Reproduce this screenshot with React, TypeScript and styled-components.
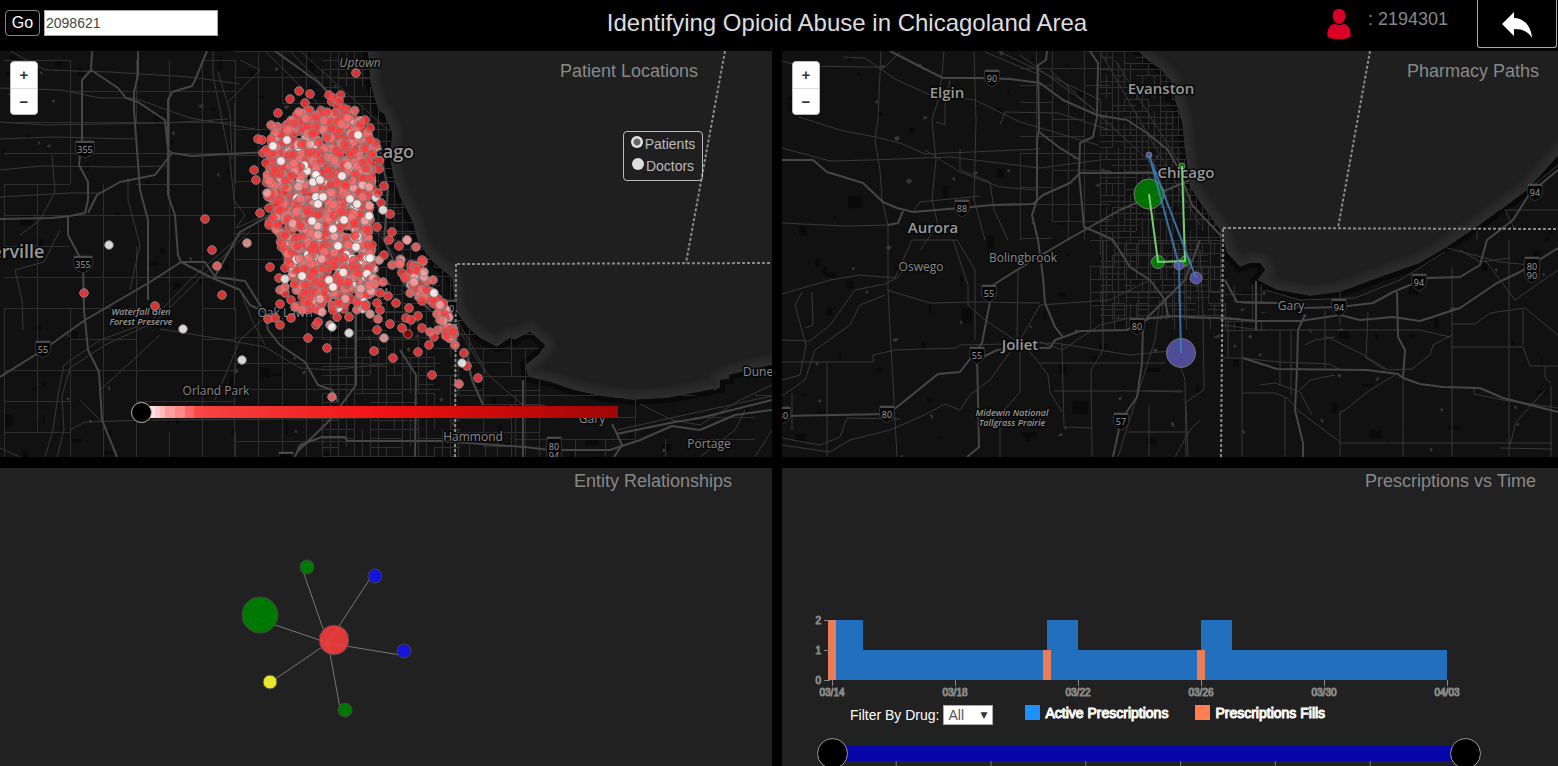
import React from 'react';
import styled, { createGlobalStyle } from 'styled-components';

const GlobalStyle = createGlobalStyle`
  * { box-sizing: border-box; }
  body {
    margin: 0;
    background: #000;
    font-family: "Liberation Sans", Arial, sans-serif;
  }
`;

/* ---------- page frame ---------- */

const Page = styled.div`
  display: flex;
  flex-direction: column;
  height: 100vh;
  overflow: hidden;
`;

const Header = styled.header`
  display: flex;
  align-items: flex-start;
  height: 51px;
  flex: none;
`;

const SearchForm = styled.form`
  display: flex;
  gap: 4px;
  padding: 10px 0 0 5px;
`;

const GoButton = styled.button`
  width: 35px;
  height: 26px;
  padding: 0;
  border: 1px solid #888;
  border-radius: 4px;
  background: #000;
  color: #fff;
  font: 16px "Liberation Sans", Arial, sans-serif;
`;

const PatientInput = styled.input`
  width: 174px;
  height: 26px;
  padding: 0 1px;
  border: 1px solid #aaa;
  background: #fff;
  color: #444;
  font: 14px "Liberation Sans", Arial, sans-serif;
`;

const PageTitle = styled.h1`
  flex: 1;
  margin: 0;
  padding: 8px 0 0 150px;
  text-align: center;
  white-space: nowrap;
  color: #ddd;
  font-size: 24px;
  font-weight: 400;
  line-height: 30px;
`;

const CurrentPatient = styled.div`
  display: flex;
  gap: 16px;
  padding: 8px 29px 0 0;
  color: #888;
  font-size: 18px;
  line-height: 22px;
`;

const BackButton = styled.button`
  display: flex;
  align-items: center;
  justify-content: center;
  width: 80px;
  height: 48px;
  margin-right: 1px;
  padding: 3px 0 0;
  border: 1px solid #aaa;
  border-top: 0;
  border-radius: 0 0 3px 3px;
  background: #000;
`;

const Dashboard = styled.main`
  flex: 1;
  min-height: 0;
  display: grid;
  grid-template-columns: minmax(0, 193fr) minmax(0, 194fr);
  grid-template-rows: minmax(0, 203fr) minmax(0, 149fr);
  gap: 11px 10px;
`;

const Panel = styled.section`
  position: relative;
  display: flex;
  flex-direction: column;
  overflow: hidden;
  background: #212121;
`;

const PanelTitle = styled.h2<{ $inset: number; $overlay?: boolean }>`
  margin: 0;
  padding-right: ${(p) => p.$inset}px;
  text-align: right;
  color: #888;
  font-size: 18px;
  font-weight: 400;
  line-height: 26px;
  ${(p) => p.$overlay && 'position: absolute; top: 7px; right: 0;'}
`;

const Canvas = styled.svg`
  display: block;
  width: 100%;
  flex: 1;
  min-height: 0;
`;

/* ---------- map controls ---------- */

const ZoomBox = styled.div`
  position: absolute;
  top: 10px;
  left: 10px;
  display: flex;
  flex-direction: column;
  width: 28px;
  height: 54px;
  border: 1px solid #bbb;
  border-radius: 4px;
  overflow: hidden;
  background: #fff;
`;

const ZoomButton = styled.button`
  flex: 1;
  padding: 0;
  border: 0;
  background: #fff;
  color: #333;
  font: bold 15px "Liberation Sans", Arial, sans-serif;
  &:first-child { border-bottom: 1px solid #ddd; }
`;

const LayerChoice = styled.fieldset`
  position: absolute;
  top: 80px;
  right: 69px;
  display: flex;
  flex-direction: column;
  align-items: center;
  width: 80px;
  height: 50px;
  margin: 0;
  padding: 1px 0 0;
  border: 1px solid #bbb;
  border-radius: 4px;
`;

const LayerLabel = styled.label`
  display: flex;
  align-items: center;
  gap: 2px;
  color: #bbb;
  font-size: 14px;
  line-height: 22px;
`;

const Radio = styled.input`
  appearance: none;
  width: 12px;
  height: 12px;
  margin: 0 0 4px;
  border-radius: 50%;
  background: #ddd;
  &:checked {
    background: radial-gradient(circle, #666 0 3px, #e4e4e4 4px);
  }
`;

const RangeSlider = styled.input`
  appearance: none;
  position: absolute;
  left: 17%;
  top: 350px;
  width: 63%;
  height: 21px;
  margin: 0;
  background: transparent;
  &::-webkit-slider-runnable-track {
    height: 12px;
    background: linear-gradient(
      90deg,
      transparent 2%, #ffe0e0 2% 5%, #fcc 5% 6%, #fbb 6% 7%, #f99f9f 7% 9%,
      #f88 9% 11%, #f66 11% 13%, #f94a4a 13%, #f44141 16%, #f21414 50%, #d20a0a 72%, #9c0707
    );
  }
  &::-webkit-slider-thumb {
    appearance: none;
    width: 21px;
    height: 21px;
    margin-top: -4px;
    border: 1px solid #bbb;
    border-radius: 50%;
    background: #000;
  }
`;

/* ---------- prescriptions panel ---------- */

const Chart = styled.svg`
  display: block;
  flex: none;
  width: 100%;
  margin-top: 118px;
`;

const AxisText = styled.g`
  fill: #888;
  stroke: #888;
  stroke-width: 1px;
  font: 10px "Liberation Sans", Arial, sans-serif;
`;

const FilterRow = styled.div`
  display: flex;
  align-items: flex-start;
  flex: none;
  height: 38px;
  padding: 5px 0 0 68px;
  white-space: nowrap;
`;

const FilterLabel = styled.label`
  display: flex;
  align-items: center;
  gap: 4px;
  margin-right: 32px;
  color: #fff;
  font-size: 14px;
  line-height: 20px;
`;

const SelectWrap = styled.span`
  position: relative;
  &::after {
    content: "▼";
    position: absolute;
    top: 0;
    right: 6px;
    color: #333;
    font-family: "DejaVu Sans", sans-serif;
    font-size: 9px;
    pointer-events: none;
  }
`;

const DrugSelect = styled.select`
  appearance: none;
  display: block;
  width: 50px;
  height: 20px;
  padding: 0 4px;
  border: 1px solid #aaa;
  border-radius: 0;
  background: #fff;
  color: #555;
  font: 14px "Liberation Sans", Arial, sans-serif;
`;

const LegendItem = styled.span<{ $color: string }>`
  display: flex;
  gap: 5px;
  margin-right: 27px;
  color: #fff;
  font-size: 14px;
  line-height: 16px;
  -webkit-text-stroke: 1px #fff;
  &::before {
    content: "";
    width: 15px;
    height: 15px;
    background: ${(p) => p.$color};
  }
`;

const TimeRange = styled.div`
  position: relative;
  flex: none;
  height: 31px;
  margin: 0 77px 0 35px;
  padding: 8px 16px 0;
`;

const TimeTrack = styled.div`
  height: 15px;
  background: #0505a8;
`;

const TimeTicks = styled.svg`
  display: block;
  width: 100%;
  height: 8px;
`;

const TimeHandle = styled.input`
  appearance: none;
  position: absolute;
  inset: 0;
  width: 100%;
  height: 31px;
  margin: 0;
  background: transparent;
  pointer-events: none;
  &::-webkit-slider-thumb {
    appearance: none;
    width: 31px;
    height: 31px;
    border: 1px solid #999;
    border-radius: 50%;
    background: #000;
    pointer-events: auto;
  }
`;

/* ---------- map drawing ---------- */

const MapText = styled.text<{ $size: number; $strong?: boolean; $italic?: boolean }>`
  fill: ${(p) => (p.$strong ? '#999' : '#888')};
  stroke: #080808;
  stroke-width: 3px;
  stroke-linejoin: round;
  paint-order: stroke;
  text-anchor: middle;
  font-family: "Open Sans", "Noto Sans", sans-serif;
  font-size: ${(p) => p.$size}px;
  font-weight: ${(p) => (p.$strong ? 600 : 400)};
  font-style: ${(p) => (p.$italic ? 'italic' : 'normal')};
`;

const ShieldText = styled(MapText)`
  fill: #a0a0a0;
  stroke: none;
`;

const Streets = styled.g`
  fill: none;
  stroke: #2e2e2e;
  stroke-width: 1px;
`;

const Roads = styled.g`
  fill: none;
  stroke: #393939;
  stroke-width: 1px;
  stroke-linejoin: round;
`;

const Highways = styled.g`
  fill: none;
  stroke: #464646;
  stroke-width: 2px;
  stroke-linejoin: round;
`;

const Borders = styled.g`
  fill: none;
  stroke: #8a8a8a;
  stroke-width: 2px;
  stroke-dasharray: 3 2;
`;

const Dots = styled.g`
  stroke: #8c7f7f;
  stroke-width: 1px;
  fill-opacity: 0.84;
`;

type Pt = [number, number];
type Label = [string, number, number, number, boolean?, boolean?];

function seeded(seed: number) {
  let s = seed;
  return () => {
    s = (s * 16807) % 2147483647;
    return s / 2147483647;
  };
}

function Shield({ x, y, lines }: { x: number; y: number; lines: string[] }) {
  const wide = lines[0].length > 2;
  const w = wide ? 10 : 8;
  const h = lines.length > 1 ? 17 : 10;
  const top = lines.length > 1 ? y - 10 : y - 8;
  return (
    <g>
      <path
        d={`M${x - w + 1} ${top}H${x + w - 1}Q${x + w} ${y - 2} ${x + w - 1} ${y + h - 7}Q${x + w - 3} ${y + h - 3} ${x} ${y + h - 1}Q${x - w + 3} ${y + h - 3} ${x - w + 1} ${y + h - 7}Q${x - w} ${y - 2} ${x - w + 1} ${top}Z`}
        fill="#050505"
        stroke="#333"
      />
      <path d={`M${x - w + 1} ${top + 1}H${x + w - 1}`} stroke="#4a4a4a" strokeWidth="2" />
      {lines.map((t, i) => (
        <ShieldText key={t} $size={9} x={x} y={y + (lines.length > 1 ? 3 + i * 9 : 4)}>{t}</ShieldText>
      ))}
    </g>
  );
}

interface BaseMapProps {
  id: string;
  box: [number, number, number, number];
  land: string;
  coast: string;
  streets: string;
  roads: string[];
  highways: string[];
  borders: string;
  labels: Label[];
  shields: [number, number, ...string[]][];
  children?: React.ReactNode;
}

function BaseMap(p: BaseMapProps) {
  const [bx, by, bw, bh] = p.box;
  const rnd = seeded(bw * 7);
  const blobs = Array.from({ length: 190 }, () => ({
    x: bx + rnd() * bw,
    y: by + rnd() * bh,
    w: 2 + rnd() * rnd() * 16,
    h: 2 + rnd() * rnd() * 14,
    water: rnd() > 0.7,
  }));
  return (
    <Canvas viewBox={p.box.join(' ')} preserveAspectRatio="xMidYMid slice">
      <defs>
        <clipPath id={p.id}><path d={p.land} /></clipPath>
      </defs>
      <rect x={bx} y={by} width={bw} height={bh} fill="#1f1f1f" />
      <g fill="none" stroke="#555" strokeLinejoin="round">
        {[24, 20, 16, 12, 8, 5].map((w) => (
          <path key={w} d={p.coast} strokeWidth={w} strokeOpacity="0.055" />
        ))}
      </g>
      <path d={p.land} fill="#111" />
      <g clipPath={`url(#${p.id})`}>
        <path d={p.coast} fill="none" stroke="#090909" strokeWidth="10" />
        {blobs.map((b, i) =>
          b.water ? (
            <path
              key={i}
              d={`M${b.x} ${b.y}l${b.w / 3} -2l2 ${b.h / 4}l-${b.w / 4} 3z`}
              fill="#363636"
            />
          ) : (
            <rect key={i} x={b.x} y={b.y} width={b.w} height={b.h} fill="#0a0a0a" />
          ),
        )}
        <Streets><path d={p.streets} /></Streets>
        <Roads>{p.roads.map((d) => <path key={d} d={d} />)}</Roads>
        <Highways>{p.highways.map((d) => <path key={d} d={d} />)}</Highways>
      </g>
      <Borders><path d={p.borders} /></Borders>
      {p.shields.map(([x, y, ...lines]) => <Shield key={`${x}-${y}`} x={x} y={y} lines={lines} />)}
      {p.labels.map(([t, x, y, size, strong, italic]) => (
        <MapText key={t} x={x} y={y} $size={size} $strong={strong} $italic={italic}>{t}</MapText>
      ))}
      {p.children}
    </Canvas>
  );
}

function gridPath(x0: number, y0: number, x1: number, y1: number, dx: number, dy: number, seed: number, gaps: number) {
  const rnd = seeded(seed);
  let d = '';
  for (let x = x0; x <= x1; x += dx) {
    for (let y = y0; y < y1; y += dy * 2) {
      if (rnd() > gaps) d += `M${x}.5 ${y}V${Math.min(y1, y + dy * 2)}`;
    }
  }
  for (let y = y0; y <= y1; y += dy) {
    for (let x = x0; x < x1; x += dx * 2) {
      if (rnd() > gaps) d += `M${x} ${y}.5H${Math.min(x1, x + dx * 2)}`;
    }
  }
  return d;
}

/* ---------- patient map ---------- */

const cityCoast =
  'M367 40L370 80L373 93L378 110L384 114L392 133L390 157L393 177L400 197L413 223L418 243L433 262L452 278L455 310L467 327L480 338L497 347L510 338L515 340L520 337L530 332L545 345L538 355L525 365L528 377L550 382L573 390L600 396L633 400L667 398L710 390L720 388L720 380L729 379L729 375L780 363';

const cityStreets =
  gridPath(322, 51, 460, 457, 8, 9, 11, 0.4) +
  gridPath(234, 51, 440, 457, 24, 26, 5, 0.1) +
  gridPath(4, 60, 236, 457, 33, 31, 9, 0.35) +
  gridPath(455, 395, 772, 457, 30, 22, 3, 0.3) +
  gridPath(455, 320, 540, 457, 14, 14, 21, 0.4);

const cityRoads = [
  'M0 122L45 125L168 123L228 119',
  'M0 88L60 90L100 98L134 98L190 118L260 130',
  'M0 139L52 137L135 139',
  'M0 170L40 166L120 167L168 166',
  'M0 197L70 193L100 193',
  'M10 51L45 70L110 72L190 77L240 84',
  'M213 51L213 75L230 160L234 200L245 215L236 228L290 205',
  'M218 72L230 112L232 160M240 60L260 70L228 102',
  'M265 51L380 165M290 51L384 150M300 51L390 132',
  'M52 155L55 192L40 220L20 235',
  'M60 230L44 262L15 270L22 300L23 330',
  'M128 178L128 200L140 245L130 290',
  'M160 329L215 338L265 347L300 368L330 370L385 364',
  'M85 422L150 420L290 419L430 417',
  'M240 290L252 320L265 345M215 400L240 340L262 320',
  'M45 457L53 430L58 395L64 365L100 340L150 322L190 280L245 231',
  'M57 457L64 430L62 396L70 368L105 345L155 322L195 283L250 231',
  'M0 448L20 457M85 422L70 430M100 420L80 400M160 335L120 372L100 390',
  'M390 51L380 60M360 210L400 262L440 300L485 372L523 405L545 405',
  'M400 290L430 310L460 325L480 360L486 372',
  'M640 404L672 420L700 425L740 400L772 385',
  'M617 430L680 416L735 404L772 396',
  'M700 457L735 430L745 410M755 457L772 430',
];

const cityHighways = [
  'M92 51L91 70L82 80L82 138L79 165L88 182L88 200L85 213L70 216L52 218L0 219',
  'M68 216L68 235L83 263L84 310L88 350L99 372L102 420L117 457',
  'M91 70L118 88L126 98L138 102L165 120L168 150L172 153L192 156L247 153L300 152L384 150',
  'M207 51L195 80L192 86L172 92L168 100L168 195L175 215L178 255L181 262L210 277L240 290L250 305L265 312L268 330L280 345L305 362L318 385L332 390L338 402',
  'M172 153L155 175L120 182L97 195L88 213',
  'M0 377L43 350L85 320L150 282L181 262L205 262L216 278M214 277L245 281L260 305L270 322',
  'M138 51L138 75L134 92L134 110L140 190L148 220L148 300',
  'M275 51L318 82L340 105L380 150L388 190L384 240L405 285L430 310',
  'M214 278L240 232L290 204L380 190',
  'M295 457L300 445L322 437L345 437L347 441L372 441L440 441L525 447L550 450L610 450L640 440L672 426L700 430L735 415L772 410',
  'M356 310L356 385L330 420L297 452',
  'M400 350L416 375L415 457M523 380V457M466 350L472 380L483 405',
  'M612 424L616 432L622 445L614 457M616 434L675 422L700 418L772 400',
];

const cityLabels: Label[] = [
  ['Uptown', 360, 67, 12, false, true],
  ['Chicago', 380, 158, 18, true],
  ['Naperville', 0, 258, 18, true],
  ['Waterfall Glen', 141, 315, 9, true, true],
  ['Forest Preserve', 141, 325, 9, true, true],
  ['Oak Lawn', 285, 317, 12],
  ['Orland Park', 216, 395, 12],
  ['Hammond', 473, 441, 12],
  ['Gary', 592, 423, 12],
  ['Portage', 709, 448, 12],
  ['Dune Acres', 775, 376, 12],
];

const RED = '#ff3939';
const ROSE = '#ff6d6d';
const PINK = '#f7a4a4';
const WHITE = '#ffffff';

/* y, left edge, right edge of the dense patient area */
const cloud: [number, number, number][] = [
  [93, 298, 340], [105, 300, 346], [120, 288, 362], [135, 272, 370], [150, 268, 373],
  [170, 267, 374], [190, 266, 372], [210, 272, 370], [235, 276, 371], [255, 286, 373],
  [275, 290, 374], [292, 296, 374], [305, 305, 366], [316, 318, 360],
];

function patientCloud() {
  const rnd = seeded(4242);
  const out: { x: number; y: number; c: string }[] = [];
  for (let n = 0; n < 1500; n++) {
    const y = 95 + 218 * (n % 8 === 0 ? rnd() : Math.min(rnd() * 0.92 + 0.07, 1));
    const i = Math.max(0, cloud.findIndex((r) => r[0] > y) - 1);
    const [ya, la, ra] = cloud[i];
    const [yb, lb, rb] = cloud[i + 1];
    const t = (y - ya) / (yb - ya);
    const left = la + (lb - la) * t;
    const right = ra + (rb - ra) * t;
    const sparse = (y < 118 || y > 295) && rnd() > 0.4;
    if (sparse) continue;
    const spread = n % 14 === 0 ? 1.18 : 1;
    const u = (rnd() - 0.5) * spread;
    const x = (left + right) / 2 + u * (right - left);
    const k = rnd();
    const whiteShare = y > 165 && u > -0.25 ? 0.1 : 0.03;
    const c = k < whiteShare ? WHITE : k < whiteShare + 0.05 ? PINK : k < 0.38 ? ROSE : RED;
    out.push({ x, y, c });
  }
  return out;
}

const outer: Record<string, Pt[]> = {
  [RED]: [
    [356, 73], [299, 91], [310, 94], [290, 99], [329, 95], [339, 101], [278, 113], [305, 103], [258, 139], [262, 140],
    [263, 153], [266, 163], [254, 170], [256, 180], [370, 128], [365, 120], [370, 140], [372, 154], [379, 169],
    [384, 186], [378, 193], [381, 203], [390, 214], [377, 227], [392, 232], [389, 240], [384, 255], [260, 213],
    [269, 208], [269, 225], [205, 219], [212, 250], [222, 295], [84, 293], [155, 306], [270, 267], [285, 268],
    [279, 278], [285, 293], [291, 300], [280, 304], [298, 306], [280, 325], [268, 319], [308, 338], [316, 325],
    [337, 317], [349, 317], [327, 348], [308, 303], [377, 281], [380, 293], [388, 296], [396, 303], [377, 303],
    [380, 310], [374, 351], [393, 358], [402, 328], [406, 318], [418, 316], [411, 320], [422, 328], [429, 345],
    [418, 352], [434, 337], [446, 336], [433, 300], [409, 308], [402, 273], [415, 267], [422, 260], [432, 375],
    [464, 353], [467, 366], [478, 378], [377, 330], [390, 324], [275, 318], [365, 305], [372, 245], [266, 150],
    [318, 322], [291, 318], [322, 303], [422, 301], [427, 290], [417, 270], [405, 278], [399, 246],
  ],
  [ROSE]: [
    [271, 125], [217, 266], [302, 310], [295, 307], [375, 284], [369, 285], [392, 265], [378, 319], [332, 397],
    [459, 384], [438, 330], [440, 320], [430, 332], [383, 282], [455, 345], [437, 314], [400, 264], [407, 240],
    [416, 247], [433, 280], [280, 290], [285, 287],
  ],
  [PINK]: [[247, 243], [267, 193], [407, 240], [384, 338], [322, 312], [370, 314], [320, 299], [330, 325], [424, 277], [414, 282], [369, 187], [424, 272], [440, 305]],
  [WHITE]: [
    [287, 140], [273, 146], [358, 135], [316, 175], [313, 182], [342, 176], [316, 197], [323, 197], [318, 204],
    [350, 199], [357, 204], [383, 210], [312, 221], [344, 220], [333, 229], [338, 246], [356, 247], [302, 276],
    [285, 279], [329, 280], [333, 287], [332, 327], [349, 333], [281, 161], [320, 180], [434, 293], [462, 363],
    [109, 245], [183, 329], [242, 360],
  ],
  '#a00000': [[408, 334]],
};

/* the tail of patients along the south-east shore */
function shoreTail() {
  const rnd = seeded(77);
  const spine: Pt[] = [[410, 262], [412, 278], [420, 294], [436, 300], [444, 310], [449, 324], [451, 338]];
  return Array.from({ length: 66 }, () => {
    const s = rnd() * 5.99;
    const i = Math.floor(s);
    const t = s - i;
    const wide = s < 2 ? 26 : 10;
    return {
      x: spine[i][0] + (spine[i + 1][0] - spine[i][0]) * t + (rnd() - 0.5) * wide,
      y: spine[i][1] + (spine[i + 1][1] - spine[i][1]) * t + (rnd() - 0.5) * 9,
      c: [RED, RED, RED, ROSE, ROSE, PINK][Math.floor(rnd() * 6)],
    };
  });
}

function PatientMap() {
  const dots = [...patientCloud(), ...shoreTail()];
  return (
    <BaseMap
      id="city-land"
      box={[0, 51, 772, 406]}
      land={`${cityCoast}V470H-10V40Z`}
      coast={cityCoast}
      streets={cityStreets}
      roads={cityRoads}
      highways={cityHighways}
      borders="M725 51L686 263M457 264L772 263M456 264L455 457"
      labels={cityLabels}
      shields={[[85, 149, '355'], [83, 264, '355'], [43, 349, '55'], [554, 447, '80', '94'], [383, 291, '94'], [449, 308, '90'], [286, 460, '57']]}
    >
      <Dots>
        {dots.map((d, i) => <circle key={i} cx={d.x} cy={d.y} r="4.3" fill={d.c} />)}
        {Object.entries(outer).map(([c, pts]) =>
          pts.map(([x, y], i) => <circle key={`${c}${i}`} cx={x} cy={y} r="4.3" fill={c} />),
        )}
      </Dots>
    </BaseMap>
  );
}

/* ---------- pharmacy map ---------- */

const regionCoast =
  'M1134 40L1138 51L1147 60L1160 69L1170 80L1175 100L1182 123L1185 150L1190 187L1203 207L1220 230L1227 253L1240 267L1250 263L1260 263L1265 270L1257 280L1277 290L1310 296L1340 292L1354 287L1367 282L1420 263L1447 247L1477 227L1527 190L1570 143';

const regionStreets =
  gridPath(1100, 51, 1225, 320, 6, 6, 31, 0.3) +
  gridPath(1020, 51, 1110, 240, 16, 17, 8, 0.2) +
  gridPath(1090, 240, 1225, 330, 12, 13, 14, 0.25) +
  gridPath(1225, 285, 1265, 330, 9, 9, 6, 0.3);

const regionRoads = [
  'M782 61L800 66L870 67L885 67L900 52M843 57L865 58L895 79L930 95L975 100L1020 122L1098 145',
  'M881 51L878 118L875 140L880 170L882 200L888 225L888 290L892 365L897 457',
  'M799 117L840 130L875 137L900 143L925 154L1040 149',
  'M782 148L830 161L870 160L950 157L1040 168L1100 160',
  'M782 223L845 226L890 225M913 212L920 202L980 196',
  'M944 51L942 75L938 100L932 120L936 160L932 200L938 225L920 250',
  'M936 122L945 125L945 105L950 80M925 150L960 172L1000 187L1037 190',
  'M960 149V170L990 182L994 210L1008 240',
  'M974 51L976 120L974 200L985 240M1000 125L1005 112L1058 113L1110 130',
  'M1020 55L1095 110M985 52L1040 75M998 51L1100 100M1100 51L1200 225M1115 60L1190 180M1050 70L1170 180',
  'M782 294L830 280L860 275L895 278L912 240L957 240',
  'M782 340L810 341L830 325L855 290L885 284L897 278L912 262',
  'M887 290L930 303L975 302L1040 303',
  'M782 362H873V355L895 350L957 348L960 345L1055 343L1130 355L1180 350',
  'M782 396L805 380L815 350L850 325L860 305L885 295',
  'M802 292L795 305L806 345L800 375L782 380M812 292L813 325L805 328',
  'M827 362V457M792 393L792 430M782 438L820 445L840 437L847 418L900 419',
  'M782 445L830 452L850 440L890 430L920 417L945 404L960 410L970 395L990 380L1010 352',
  'M953 240L968 285L968 305L985 320L1015 340M957 240L975 270L975 340',
  'M1018 270L1017 340L1024 345L1035 358L1048 375L1050 392L1062 412M1020 352V392L1000 415V457',
  'M1040 363H1165M1054 391H1183M1062 343L1064 427L1092 428M1092 457L1091 370L1103 350V240',
  'M1020 340L1040 305L1110 300L1150 280M1035 340L1062 350L1100 325L1130 318',
  'M1149 405V457M1128 432L1187 432M1180 365L1185 380L1186 457M1200 250L1203 315L1204 390L1186 402L1188 457',
  'M1175 457L1190 430L1200 420M1145 391L1182 392M1118 457L1155 340L1160 300',
  'M1280 330V386M1291 330V395M1228 320V357M1242 318V457M1223 325L1260 330L1420 330L1450 337',
  'M1223 358H1240L1280 362L1330 364L1340 370M1242 393H1275L1287 398L1300 412L1340 442V412L1345 410L1370 390L1395 375',
  'M1285 397V457M1340 442V457M1340 443H1552M1403 380V457M1452 267V457M1509 240V457M1551 385V457',
  'M1340 280V325M1368 312L1366 358L1385 370M1325 310V369M1325 336L1360 353L1388 370L1412 369L1430 355L1433 345L1452 335',
  'M1452 324L1475 324L1490 313L1525 308L1558 335M1452 347H1523L1530 366H1558M1523 310V345',
  'M1447 248L1500 262L1530 265M1510 258L1480 262L1460 250M1485 260L1515 300L1558 270',
  'M1474 388V394L1503 400L1558 408M1545 366V378L1551 383M1500 448L1552 449M1510 445L1516 422L1545 390',
  'M1305 345L1315 340L1335 337M1300 390L1310 380L1335 375M1260 385L1275 383L1300 392L1312 415',
  'M1265 290L1300 300L1355 298L1400 280L1445 252M1477 240V228M1558 210H1505L1515 230M1500 210L1540 180L1558 165',
];

const regionHighways = [
  'M890 51L923 68L943 78L980 78L1010 79L1040 83L1063 100L1097 115L1127 120L1147 133L1168 150L1178 168L1192 205L1225 240',
  'M782 160L813 160L827 172L863 183L883 202L897 208L913 212L960 208L993 205L1033 204L1043 195L1070 183L1080 173L1190 173',
  'M888 225L898 223L903 211',
  'M1047 51L1046 60L1038 65L1039 130L1037 140L1037 200L1032 215L1038 240L1043 277L1045 303L1055 327L1063 337',
  'M1090 51L1098 63L1097 117L1093 137L1080 143L1079 173L1084 227L1103 235L1113 240L1130 267L1150 280L1165 300L1168 316L1240 319',
  'M1039 132L1060 148L1080 160M1190 180L1120 210L1067 240L1033 260L993 285L989 307L982 343L967 363L960 372L938 374L897 407L887 414L782 416',
  'M977 355L978 400L979 447L967 457M977 360L997 350L1025 348L1050 348L1055 340L1080 331L1127 330L1150 318L1170 317',
  'M1143 323L1142 363L1137 397L1121 420L1113 457M1143 322L1185 280L1200 240',
  'M1305 315L1298 330L1297 370L1295 410L1303 443V457',
  'M1223 318L1257 321L1300 321L1340 315L1360 320L1393 317L1420 321L1460 308L1497 283L1520 272L1558 248',
  'M1225 280L1237 302L1277 303L1303 308L1340 307L1373 303L1393 292L1427 278L1460 277L1480 265L1487 240L1513 220L1530 193L1558 170',
  'M1397 292L1398 337L1405 350L1403 378L1420 384L1443 387L1480 388L1503 398L1558 412',
  'M1403 378L1398 374L1367 370L1277 369L1243 358M1256 281V330',
];

const regionLabels: Label[] = [
  ['Elgin', 947, 98, 15, true],
  ['Evanston', 1161, 94, 15, true],
  ['Chicago', 1186, 178, 15, true],
  ['Aurora', 933, 233, 15, true],
  ['Bolingbrook', 1023, 262, 12],
  ['Oswego', 921, 271, 12],
  ['Joliet', 1020, 350, 15, true],
  ['Gary', 1291, 310, 12],
  ['Midewin National', 1012, 416, 9, true, true],
  ['Tallgrass Prairie', 1012, 426, 9, true, true],
];

function PharmacyMap() {
  return (
    <BaseMap
      id="region-land"
      box={[782, 51, 776, 406]}
      land={`${regionCoast}V470H770V40Z`}
      coast={regionCoast}
      streets={regionStreets}
      roads={regionRoads}
      highways={regionHighways}
      borders="M1370 51L1338 228M1223 228L1558 229M1223 229L1221 457"
      labels={regionLabels}
      shields={[
        [992, 78, '90'], [962, 208, '88'], [989, 293, '55'], [977, 355, '55'], [1137, 326, '80'], [887, 414, '80'],
        [783, 415, '80'], [1121, 421, '57'], [1339, 307, '94'], [1419, 282, '94'], [1535, 192, '94'], [1532, 267, '80', '90'],
      ]}
    >
      <g stroke="#777">
        <circle cx="1149" cy="194" r="15" fill="#007a00" fillOpacity="0.9" />
        <circle cx="1158" cy="262" r="6.5" fill="#007a00" />
        <circle cx="1185" cy="261" r="5" fill="#007a00" />
        <circle cx="1182" cy="166" r="3" fill="#007a00" />
        <circle cx="1149" cy="155" r="3" fill="#524f9f" />
        <circle cx="1179" cy="265" r="5" fill="#524f9f" />
        <circle cx="1196" cy="278" r="6" fill="#524f9f" />
        <circle cx="1181" cy="353" r="14.5" fill="#524f9f" fillOpacity="0.95" />
      </g>
      <g fill="none" strokeWidth="2">
        <path d="M1149 194L1158 262L1185 261L1182 166" stroke="#77cc77" />
        <path d="M1196 278L1149 155L1179 265L1181 353" stroke="#3f7fb8" strokeOpacity="0.85" />
      </g>
    </BaseMap>
  );
}

/* ---------- relationships ---------- */

const entities: [number, number, number, string][] = [
  [260, 615, 18, '#007d00'],
  [307, 567, 7, '#007d00'],
  [375, 576, 7, '#1414e6'],
  [404, 651, 7, '#1414e6'],
  [345, 710, 7, '#007d00'],
  [270, 682, 7, '#f2f22e'],
  [334, 640, 15, '#ea3c3c'],
];

function EntityGraph() {
  return (
    <Canvas viewBox="0 494 772 272" preserveAspectRatio="xMidYMid slice">
      <path
        d="M328 643L255 618M328 643L303 571M328 643L371 577M328 643L400 655M328 643L340 708M328 643L265 686"
        stroke="#777"
        fill="none"
      />
      {entities.map(([x, y, r, c]) => (
        <circle key={`${x}`} cx={x} cy={y} r={r} fill={c} fillOpacity="0.95" stroke="#444" />
      ))}
    </Canvas>
  );
}

/* ---------- prescriptions over time ---------- */

const dates: [string, number][] = [
  ['03/14', 832], ['03/18', 955], ['03/22', 1078], ['03/26', 1201], ['03/30', 1324], ['04/03', 1447],
];

function PrescriptionChart() {
  return (
    <Chart viewBox="782 612 776 88">
      <path d="M832 680V620H863V650H1047V620H1078V650H1201V620H1232V650H1447V680Z" fill="#216fbd" />
      <path d="M828 620H836V680H828ZM1043 650H1051V680H1043ZM1197 650H1205V680H1197Z" fill="#ea7c57" />
      <path d="M824 620.5H829M824 650.5H830M824 680.5H830" stroke="#888" />
      <AxisText>
        {['2', '1', '0'].map((t, i) => <text key={t} x="821" y={624 + i * 30} textAnchor="end">{t}</text>)}
        {dates.map(([t, x]) => <text key={t} x={x} y="696" textAnchor="middle">{t}</text>)}
      </AxisText>
      {dates.map(([t, x]) => <path key={t} d={`M${x}.5 680V686`} stroke="#888" />)}
    </Chart>
  );
}

function ZoomControl() {
  return (
    <ZoomBox>
      <ZoomButton type="button" aria-label="Zoom in">+</ZoomButton>
      <ZoomButton type="button" aria-label="Zoom out">−</ZoomButton>
    </ZoomBox>
  );
}

export default function App() {
  return (
    <Page>
      <GlobalStyle />
      <Header>
        <SearchForm onSubmit={(e) => e.preventDefault()}>
          <GoButton type="submit">Go</GoButton>
          <PatientInput aria-label="Patient number" defaultValue="2098621" />
        </SearchForm>
        <PageTitle>Identifying Opioid Abuse in Chicagoland Area</PageTitle>
        <CurrentPatient>
          <svg width="26" height="32" viewBox="0 0 26 32" fill="#d80027" aria-hidden="true">
            <path d="M13 1C17 1 19.2 3 19.2 8C19.2 13 16.500 15.600 13 15.600C9.500 15.600 6.800 13 6.800 8C6.800 3 9 1 13 1Z" />
            <path d="M6 16.500Q8 15.500 9.500 16.200Q13 17.800 16.500 16.200Q18 15.500 20 16.500C23 18 24.500 22 24.700 27C24.700 29.500 22 31 13 31C4 31 1.300 29.500 1.300 27C1.500 22 3 18 6 16.500Z" />
          </svg>
          <span>: 2194301</span>
        </CurrentPatient>
        <BackButton type="button" aria-label="Back">
          <svg width="31" height="27" viewBox="0 0 31 27" fill="#fff">
            <path d="M0 12L12 0V6C21 6 29 13 30 26C26 19 20 17 12 17V24Z" />
          </svg>
        </BackButton>
      </Header>
      <Dashboard>
        <Panel>
          <PatientMap />
          <PanelTitle $inset={74} $overlay>Patient Locations</PanelTitle>
          <ZoomControl />
          <LayerChoice aria-label="Map layer">
            <LayerLabel>
              <Radio type="radio" name="layer" defaultChecked />
              Patients
            </LayerLabel>
            <LayerLabel>
              <Radio type="radio" name="layer" />
              Doctors
            </LayerLabel>
          </LayerChoice>
          <RangeSlider type="range" aria-label="Minimum risk" min="0" max="100" defaultValue="0" />
        </Panel>
        <Panel>
          <PharmacyMap />
          <PanelTitle $inset={19} $overlay>Pharmacy Paths</PanelTitle>
          <ZoomControl />
        </Panel>
        <Panel>
          <PanelTitle $inset={40}>Entity Relationships</PanelTitle>
          <EntityGraph />
        </Panel>
        <Panel>
          <PanelTitle $inset={22}>Prescriptions vs Time</PanelTitle>
          <PrescriptionChart />
          <FilterRow>
            <FilterLabel>
              Filter By Drug:
              <SelectWrap>
                <DrugSelect defaultValue="All"><option>All</option></DrugSelect>
              </SelectWrap>
            </FilterLabel>
            <LegendItem $color="#1e90ff">Active Prescriptions</LegendItem>
            <LegendItem $color="#ff7f50">Prescriptions Fills</LegendItem>
          </FilterRow>
          <TimeRange>
            <TimeTrack />
            <TimeTicks>
              {[10, 25, 40, 55, 70, 85].map((x) => (
                <line key={x} x1={`${x}%`} x2={`${x}%`} y1="0" y2="8" stroke="#777" />
              ))}
            </TimeTicks>
            <TimeHandle type="range" aria-label="Start date" min="0" max="20" defaultValue="0" />
            <TimeHandle type="range" aria-label="End date" min="0" max="20" defaultValue="20" />
          </TimeRange>
        </Panel>
      </Dashboard>
    </Page>
  );
}
